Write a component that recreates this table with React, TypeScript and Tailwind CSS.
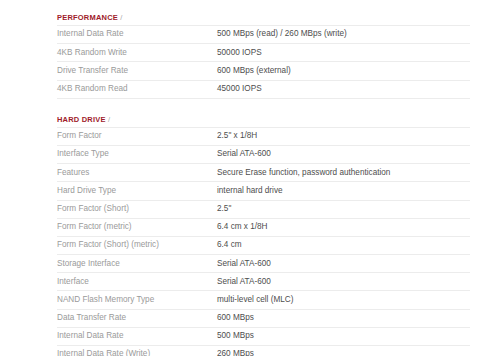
import React from "react";

type Spec = [string, string];

const performance: Spec[] = [
	["Internal Data Rate", "500 MBps (read) / 260 MBps (write)"],
	["4KB Random Write", "50000 IOPS"],
	["Drive Transfer Rate", "600 MBps (external)"],
	["4KB Random Read", "45000 IOPS"],
];

const hardDrive: Spec[] = [
	["Form Factor", "2.5\" x 1/8H"],
	["Interface Type", "Serial ATA-600"],
	["Features", "Secure Erase function, password authentication"],
	["Hard Drive Type", "internal hard drive"],
	["Form Factor (Short)", "2.5\""],
	["Form Factor (metric)", "6.4 cm x 1/8H"],
	["Form Factor (Short) (metric)", "6.4 cm"],
	["Storage Interface", "Serial ATA-600"],
	["Interface", "Serial ATA-600"],
	["NAND Flash Memory Type", "multi-level cell (MLC)"],
	["Data Transfer Rate", "600 MBps"],
	["Internal Data Rate", "500 MBps"],
	["Internal Data Rate (Write)", "260 MBps"],
];

const Section: React.FC<{ title: string; rows: Spec[] }> = ({ title, rows }) => (
	<section>
		<h3 className="h-[25px] pt-[13px] text-[7.5px] font-bold leading-[10px] text-[#9e1b2a] tracking-[0.2px]">
			{title} <span className="font-normal text-[#aaa]">/</span>
		</h3>
		<div className="border-b border-[#ececec]">
			{rows.map(([label, value]) => (
				<div
					key={label}
					className="flex h-[18.2px] items-center border-t border-[#ececec] text-[8.2px]"
				>
					<span className="w-[160px] text-[#9a9a9a]">{label}</span>
					<span className="text-[#4d4d4d]">{value}</span>
				</div>
			))}
		</div>
	</section>
);

export default function App() {
	return (
		<div
			className="h-[356px] w-[500px] overflow-hidden bg-white"
			style={{ fontFamily: "'Liberation Sans', Arial, sans-serif" }}
		>
			<div className="ml-[57px] w-[413px]">
				<Section title="PERFORMANCE" rows={performance} />
				<div className="h-[3px]" />
				<Section title="HARD DRIVE" rows={hardDrive} />
			</div>
		</div>
	);
}
